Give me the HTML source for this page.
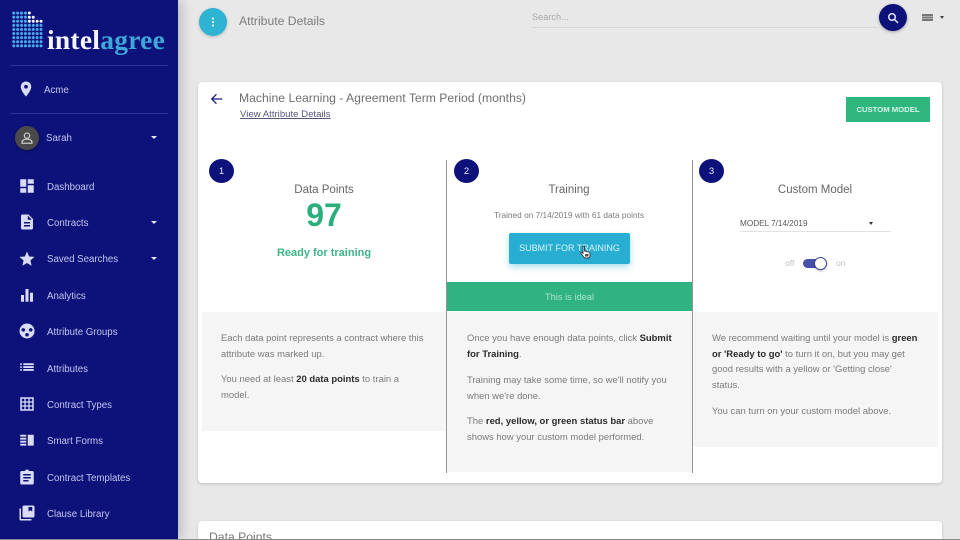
<!DOCTYPE html>
<html><head><meta charset="utf-8"><title>Attribute Details</title>
<style>
html,body{margin:0;padding:0;width:960px;height:540px;overflow:hidden;background:#e8e8e8}
body{font-family:"Liberation Sans",sans-serif;position:relative;filter:blur(.35px)}
.a{position:absolute;white-space:nowrap}
#side{position:absolute;left:0;top:0;width:178px;height:540px;background:#0d127a;box-shadow:3px 0 12px rgba(0,0,0,.22)}
.hr{position:absolute;left:10px;width:158px;height:1px;background:#2c3296}
.nav{position:absolute;left:47px;font-size:9.7px;color:#c3c6ee;line-height:14px;white-space:nowrap}
.ic{position:absolute;left:18px;width:18px;height:18px;fill:#d9dcf6}
.car{position:absolute;left:151px;width:0;height:0;border-left:3.5px solid transparent;border-right:3.5px solid transparent;border-top:3.5px solid #e6e8fa}
#card{position:absolute;left:198px;top:82px;width:744px;height:401px;background:#fff;border-radius:4px;box-shadow:0 1px 3px rgba(0,0,0,.18)}
#card2{position:absolute;left:198px;top:521px;width:744px;height:30px;background:#fff;border-radius:4px;box-shadow:0 1px 3px rgba(0,0,0,.18)}
.num{position:absolute;width:25px;height:24px;border-radius:50%;background:#0d127a;color:#e8e9fa;font-size:9.5px;line-height:26px;text-align:center}
.h{position:absolute;font-size:11.5px;color:#666;text-align:center;line-height:16px}
.panel{position:absolute;background:#f5f5f5}
.t{position:absolute;font-size:9.45px;line-height:15.6px;color:#7b7b7b;white-space:nowrap}
.t b{color:#2c2c2c}
.vl{position:absolute;width:1px;background:#969696;top:160px;height:313px}
</style></head><body>

<div id="side">
<svg class="a" style="left:10px;top:9px" width="34" height="40">
<defs><pattern id="d" x="1.8" y="2" width="3.9" height="4.1" patternUnits="userSpaceOnUse"><circle cx="1.95" cy="2.05" r="1.45" fill="#4db0f0"/></pattern></defs>
<rect x="1.8" y="2" width="31.2" height="37" fill="url(#d)"/>
<rect x="17.4" y="1" width="17" height="13.4" fill="#0d127a"/>
<g fill="#f2f4ff"><circle cx="19.35" cy="4" r="1.5"/><circle cx="19.35" cy="8.2" r="1.5"/><circle cx="23.25" cy="8.2" r="1.5"/><circle cx="19.35" cy="12.3" r="1.5"/><circle cx="23.25" cy="12.3" r="1.5"/><circle cx="27.15" cy="12.3" r="1.5"/><circle cx="31.05" cy="12.3" r="1.5"/></g>
</svg>
<div class="a" style="left:47px;top:26px;font:bold 27.5px/28px 'Liberation Serif',serif;color:#f4f5ff;letter-spacing:.25px">intel<span style="color:#3fa6d8">agree</span></div>
<div class="hr" style="top:65px"></div>
<svg class="ic" style="left:17px;top:80px" viewBox="0 0 24 24"><path d="M12 2C8.13 2 5 5.13 5 9c0 5.25 7 13 7 13s7-7.75 7-13c0-3.87-3.13-7-7-7zm0 9.5a2.5 2.5 0 1 1 0-5 2.5 2.5 0 0 1 0 5z"/></svg>
<div class="nav" style="left:44px;top:84px">Acme</div>
<div class="hr" style="top:113px"></div>
<div class="a" style="left:15px;top:126px;width:24px;height:24px;border-radius:50%;background:#4a4a4a;box-shadow:0 1px 3px rgba(0,0,0,.4)"></div>
<svg class="a" style="left:20px;top:131px" width="14" height="14" viewBox="0 0 24 24" fill="none" stroke="#c9c9c9" stroke-width="2.2"><circle cx="12" cy="8" r="4.5"/><path d="M3.5 21v-2c0-3 4-5 8.500-5s8.500 2 8.500 5v2z"/></svg>
<div class="nav" style="left:46px;top:132px">Sarah</div>
<div class="car" style="top:136px"></div>

<svg class="ic" style="top:177px" viewBox="0 0 24 24"><path d="M3 13h8V3H3zm0 8h8v-6H3zm10 0h8V11h-8zm0-18v6h8V3z"/></svg>
<div class="nav" style="top:181px">Dashboard</div>
<svg class="ic" style="top:213px" viewBox="0 0 24 24"><path d="M14 2H6a2 2 0 0 0-2 2v16a2 2 0 0 0 2 2h12a2 2 0 0 0 2-2V8zm2 16H8v-2h8zm0-4H8v-2h8zm-3-5V3.500L18.500 9z"/></svg>
<div class="nav" style="top:217px">Contracts</div>
<div class="car" style="top:221px"></div>
<svg class="ic" style="top:250px" viewBox="0 0 24 24"><path d="M12 17.270 18.180 21l-1.640-7.030L22 9.240l-7.190-.61L12 2 9.190 8.630 2 9.240l5.460 4.730L5.820 21z"/></svg>
<div class="nav" style="top:253px">Saved Searches</div>
<div class="car" style="top:257px"></div>
<svg class="ic" style="top:286px" viewBox="0 0 24 24"><path d="M4 12h4v9H4zM10 4h4v17h-4zM16 9h4v12h-4z"/></svg>
<div class="nav" style="top:290px">Analytics</div>
<svg class="ic" style="top:322px" viewBox="0 0 24 24"><circle cx="12" cy="12" r="10"/><g fill="#0d127a"><circle cx="7" cy="10.500" r="2.400"/><circle cx="17" cy="10.500" r="2.400"/><circle cx="12" cy="17" r="2.400"/></g></svg>
<div class="nav" style="top:326px">Attribute Groups</div>
<svg class="ic" style="top:358px" viewBox="0 0 24 24"><path d="M3 7h2v2.500H3zM7 7h14v2.500H7zM3 10.800h2v2.500H3zM7 10.800h14v2.500H7zM3 14.600h2v2.500H3zM7 14.600h14v2.500H7z"/></svg>
<div class="nav" style="top:363px">Attributes</div>
<svg class="ic" style="top:395px" viewBox="0 0 24 24"><path fill-rule="evenodd" d="M3 3h18v18H3zM5 5v3.500h3.500V5zM10.200 5v3.500h3.600V5zM15.500 5v3.500H19V5zM5 10.200v3.600h3.500v-3.600zM10.200 10.200v3.600h3.600v-3.600zM15.500 10.200v3.600H19v-3.600zM5 15.500V19h3.500v-3.500zM10.200 15.500V19h3.600v-3.500zM15.500 15.500V19H19v-3.500z"/></svg>
<div class="nav" style="top:399px">Contract Types</div>
<svg class="ic" style="top:431px" viewBox="0 0 24 24"><path d="M3 5h8v2.500H3zM3 9h8v2.500H3zM3 13h8v2.500H3zM3 17h8v2.500H3zM13 5h8v14.500h-8z"/></svg>
<div class="nav" style="top:435px">Smart Forms</div>
<svg class="ic" style="top:468px" viewBox="0 0 24 24"><path fill-rule="evenodd" d="M19 4h-4.200A3 3 0 0 0 12 2a3 3 0 0 0-2.800 2H5a2 2 0 0 0-2 2v14a2 2 0 0 0 2 2h14a2 2 0 0 0 2-2V6a2 2 0 0 0-2-2zM7 8h10v2H7zM7 12h10v2H7zM7 16h7v2H7z"/></svg>
<div class="nav" style="top:472px">Contract Templates</div>
<svg class="ic" style="top:504px" viewBox="0 0 24 24"><path d="M4 6H2v14a2 2 0 0 0 2 2h14v-2H4z"/><path fill-rule="evenodd" d="M20 2H8a2 2 0 0 0-2 2v12a2 2 0 0 0 2 2h12a2 2 0 0 0 2-2V4a2 2 0 0 0-2-2zm-1 8-2.500-1.500L14 10V4h5z"/></svg>
<div class="nav" style="top:508px">Clause Library</div>
</div>

<!-- top bar -->
<div class="a" style="left:199px;top:8px;width:28px;height:28px;border-radius:50%;background:#2fb3d3;box-shadow:0 1px 3px rgba(0,0,0,.2)"></div>
<svg class="a" style="left:209px;top:14px" width="8" height="16" fill="#e6f6fa"><circle cx="4" cy="4.500" r="1.100"/><circle cx="4" cy="8" r="1.100"/><circle cx="4" cy="11.500" r="1.100"/></svg>
<div class="a" style="left:239px;top:13px;font-size:12.2px;line-height:16px;color:#7c7c7c">Attribute Details</div>
<div class="a" style="left:532px;top:11px;font-size:9.200px;line-height:12px;color:#aaa">Search...</div>
<div class="a" style="left:532px;top:27px;width:345px;height:1px;background:#d8d8d8"></div>
<div class="a" style="left:879px;top:4px;width:28px;height:27px;border-radius:50%;background:#0d127a;box-shadow:0 1px 3px rgba(0,0,0,.3)"></div>
<svg class="a" style="left:887px;top:12px" width="12" height="12" viewBox="0 0 24 24" fill="none" stroke="#e4e6fa" stroke-width="3"><circle cx="10" cy="10" r="6.500"/><path d="M15 15 22 22"/></svg>
<div class="a" style="left:922px;top:14px;width:11px;height:1.500px;background:#777;box-shadow:0 2.500px 0 #777,0 5px 0 #777"></div>
<div class="a" style="left:940px;top:16px;border-left:2.500px solid transparent;border-right:2.500px solid transparent;border-top:3px solid #444"></div>

<div id="card"></div>
<div id="card2"></div>
<div class="a" style="left:209px;top:529px;font-size:12.200px;line-height:16px;color:#777">Data Points</div>
<div class="a" style="left:0;top:539px;width:960px;height:1px;background:#8a8a8a"></div>

<svg class="a" style="left:210px;top:92px" width="14" height="14" viewBox="0 0 24 24" fill="none" stroke="#171c80" stroke-width="2.200"><path d="M21 12H3M11 4l-8 8 8 8"/></svg>
<div class="a" style="left:239px;top:91px;font-size:12.200px;line-height:15px;color:#6f6f6f">Machine Learning - Agreement Term Period (months)</div>
<div class="a" style="left:240px;top:108px;font-size:9.600px;line-height:13px;color:#55557f;text-decoration:underline">View Attribute Details</div>
<div class="a" style="left:846px;top:97px;width:84px;height:25px;background:#2fb57e;color:#d8f5e8;font-size:7.700px;font-weight:bold;line-height:25px;text-align:center">CUSTOM MODEL</div>

<!-- panels -->
<div class="panel" style="left:202px;top:312px;width:244px;height:119px"></div>
<div class="panel" style="left:447px;top:312px;width:245px;height:160px"></div>
<div class="panel" style="left:693px;top:312px;width:245px;height:135px"></div>
<div class="vl" style="left:446px"></div>
<div class="vl" style="left:692px"></div>

<div class="num" style="left:209px;top:159px">1</div>
<div class="num" style="left:454px;top:159px">2</div>
<div class="num" style="left:699px;top:159px">3</div>

<div class="h" style="left:204px;width:240px;top:182px">Data Points</div>
<div class="a" style="left:204px;width:240px;top:197px;text-align:center;font-size:32px;font-weight:bold;line-height:36px;color:#2aae7b">97</div>
<div class="a" style="left:204px;width:240px;top:246px;text-align:center;font-size:11px;font-weight:bold;line-height:15px;color:#3eb586">Ready for training</div>

<div class="h" style="left:449px;width:240px;top:182px">Training</div>
<div class="a" style="left:449px;width:240px;top:209px;text-align:center;font-size:8.300px;line-height:12px;color:#7c7c7c">Trained on 7/14/2019 with 61 data points</div>
<div class="a" style="left:509px;top:233px;width:121px;height:31px;border-radius:2px;background:#27aed2;box-shadow:0 3px 7px rgba(39,174,210,.4);color:#d9f3fa;font-size:9px;line-height:31px;text-align:center">SUBMIT FOR TRAINING</div>
<svg class="a" style="left:580px;top:245px" width="11" height="14" viewBox="0 0 11 14"><path d="M3 1.500c.6-.6 1.500-.3 1.500.5v4l4 1c1 .3 1.500.9 1.500 1.800V11c0 1-1 2-2 2H5.500c-.8 0-1.300-.4-1.800-1L1 8.500c-.5-.8.500-1.500 1.200-.9L3 8.300z" fill="#fff" stroke="#333" stroke-width=".9"/><rect x="5" y="9" width="3.500" height="2.500" fill="#555"/></svg>
<div class="a" style="left:447px;top:282px;width:245px;height:29px;background:#30b380;color:#a9e5cd;font-size:9.300px;line-height:31px;text-align:center">This is ideal</div>

<div class="h" style="left:695px;width:240px;top:182px">Custom Model</div>
<div class="a" style="left:740px;top:218px;font-size:8.200px;line-height:12px;color:#555">MODEL 7/14/2019</div>
<div class="a" style="left:869px;top:222px;border-left:2.500px solid transparent;border-right:2.500px solid transparent;border-top:3px solid #333"></div>
<div class="a" style="left:740px;top:231px;width:151px;height:1px;background:#e2e2e2"></div>
<div class="a" style="left:785px;top:257px;font-size:8.600px;line-height:12px;color:#c2c2c2">off</div>
<div class="a" style="left:836px;top:257px;font-size:8.600px;line-height:12px;color:#c2c2c2">on</div>
<div class="a" style="left:803px;top:259px;width:20px;height:9px;border-radius:5px;background:#4a4fa8"></div>
<div class="a" style="left:814px;top:257px;width:11px;height:11px;border-radius:50%;background:#fff;border:1.500px solid #3e4296;box-shadow:0 1px 2px rgba(0,0,0,.3)"></div>

<div class="t" style="left:221px;top:331px">Each data point represents a contract where this<br>attribute was marked up.</div>
<div class="t" style="left:221px;top:372px">You need at least <b>20 data points</b> to train a<br>model.</div>

<div class="t" style="left:467px;top:331px">Once you have enough data points, click <b>Submit<br>for Training</b>.</div>
<div class="t" style="left:467px;top:373px">Training may take some time, so we'll notify you<br>when we're done.</div>
<div class="t" style="left:467px;top:414px">The <b>red, yellow, or green status bar</b> above<br>shows how your custom model performed.</div>

<div class="t" style="left:712px;top:331px">We recommend waiting until your model is <b>green<br>or 'Ready to go'</b> to turn it on, but you may get<br>good results with a yellow or 'Getting close'<br>status.</div>
<div class="t" style="left:712px;top:404px">You can turn on your custom model above.</div>
</body></html>
